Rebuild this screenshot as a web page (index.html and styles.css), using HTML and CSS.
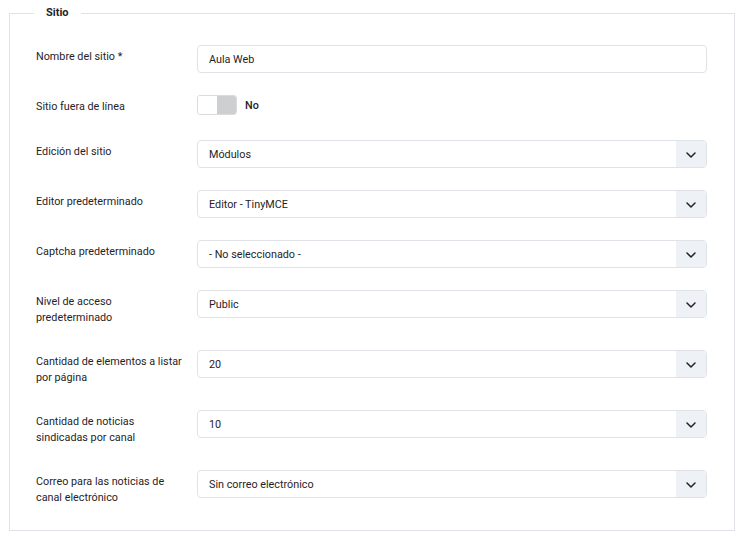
FILE: index.html
```html
<!DOCTYPE html>
<html lang="es">
<head>
<meta charset="utf-8">
<title>Sitio</title>
<link rel="stylesheet" href="styles.css">
</head>
<body>
<fieldset class="panel">
  <legend class="panel-title">Sitio</legend>
  <div class="form-grid">
    <div class="row">
      <label class="lbl">Nombre del sitio *</label>
      <div class="field"><div class="input">Aula Web</div></div>
    </div>
    <div class="row row-toggle">
      <label class="lbl">Sitio fuera de línea</label>
      <div class="field toggle-field">
        <span class="switch"><span class="switch-on"></span><span class="switch-off"></span></span>
        <span class="switch-text">No</span>
      </div>
    </div>
    <div class="row">
      <label class="lbl">Edición del sitio</label>
      <div class="field"><div class="select"><span class="val">Módulos</span><span class="caret"><svg viewBox="0 0 10 6" width="10" height="6"><path d="M1 1l4 4 4-4" fill="none" stroke="#1f2328" stroke-width="1.5" stroke-linecap="round" stroke-linejoin="round"/></svg></span></div></div>
    </div>
    <div class="row">
      <label class="lbl">Editor predeterminado</label>
      <div class="field"><div class="select"><span class="val">Editor - TinyMCE</span><span class="caret"><svg viewBox="0 0 10 6" width="10" height="6"><path d="M1 1l4 4 4-4" fill="none" stroke="#1f2328" stroke-width="1.5" stroke-linecap="round" stroke-linejoin="round"/></svg></span></div></div>
    </div>
    <div class="row">
      <label class="lbl">Captcha predeterminado</label>
      <div class="field"><div class="select"><span class="val">- No seleccionado -</span><span class="caret"><svg viewBox="0 0 10 6" width="10" height="6"><path d="M1 1l4 4 4-4" fill="none" stroke="#1f2328" stroke-width="1.5" stroke-linecap="round" stroke-linejoin="round"/></svg></span></div></div>
    </div>
    <div class="row">
      <label class="lbl">Nivel de acceso predeterminado</label>
      <div class="field"><div class="select"><span class="val">Public</span><span class="caret"><svg viewBox="0 0 10 6" width="10" height="6"><path d="M1 1l4 4 4-4" fill="none" stroke="#1f2328" stroke-width="1.5" stroke-linecap="round" stroke-linejoin="round"/></svg></span></div></div>
    </div>
    <div class="row">
      <label class="lbl">Cantidad de elementos a listar por página</label>
      <div class="field"><div class="select"><span class="val">20</span><span class="caret"><svg viewBox="0 0 10 6" width="10" height="6"><path d="M1 1l4 4 4-4" fill="none" stroke="#1f2328" stroke-width="1.5" stroke-linecap="round" stroke-linejoin="round"/></svg></span></div></div>
    </div>
    <div class="row">
      <label class="lbl">Cantidad de noticias sindicadas por canal</label>
      <div class="field"><div class="select"><span class="val">10</span><span class="caret"><svg viewBox="0 0 10 6" width="10" height="6"><path d="M1 1l4 4 4-4" fill="none" stroke="#1f2328" stroke-width="1.5" stroke-linecap="round" stroke-linejoin="round"/></svg></span></div></div>
    </div>
    <div class="row">
      <label class="lbl">Correo para las noticias de canal electrónico</label>
      <div class="field"><div class="select"><span class="val">Sin correo electrónico</span><span class="caret"><svg viewBox="0 0 10 6" width="10" height="6"><path d="M1 1l4 4 4-4" fill="none" stroke="#1f2328" stroke-width="1.5" stroke-linecap="round" stroke-linejoin="round"/></svg></span></div></div>
    </div>
  </div>
</fieldset>
</body>
</html>
```

FILE: styles.css
```css
* { box-sizing: border-box; }
html, body { margin: 0; padding: 0; background: #fff; }
body {
  font-family: Roboto, "Liberation Sans", Arial, sans-serif;
  font-size: 10.8px;
  color: #1f2328;
  width: 750px;
  height: 538px;
  overflow: hidden;
}
.panel {
  margin: 4px 0 0 9px;
  width: 726px;
  border: 1px solid #dfe3e8;
  padding: 23px 27px 22px 26px;
  min-width: 0;
}
.panel-title {
  font-weight: 700;
  font-size: 11px;
  line-height: 18px;
  padding: 0 12px;
  margin-left: -2px;
  color: #1f2328;
}
.form-grid {
  display: flex;
  flex-direction: column;
  gap: 22px;
}
.row {
  display: grid;
  grid-template-columns: 161px 1fr;
  align-items: start;
}
.lbl {
  line-height: 16px;
  padding: 4px 12px 2px 0;
}
.row-toggle .lbl { padding-top: 4px; padding-bottom: 3px; }
.input, .select {
  height: 28px;
  border: 1px solid #dfe3e7;
  border-radius: 4px;
  background: #fff;
  display: flex;
  align-items: center;
}
.input { padding: 0 11px; }
.select { padding-left: 11px; overflow: hidden; }
.val { flex: 1; }
.caret {
  width: 30px;
  align-self: stretch;
  background: #eef2f6;
  display: flex;
  align-items: center;
  justify-content: center;
  padding-top: 1px;
}
.toggle-field {
  display: flex;
  align-items: center;
  gap: 8px;
}
.switch {
  display: flex;
  width: 40px;
  height: 20px;
  border: 1px solid #d9dcdf;
  border-radius: 3px;
  overflow: hidden;
}
.switch-on { flex: 1; background: #fff; }
.switch-off { flex: 1; background: #cdcfd1; }
.switch-text { font-weight: 500; }
```
